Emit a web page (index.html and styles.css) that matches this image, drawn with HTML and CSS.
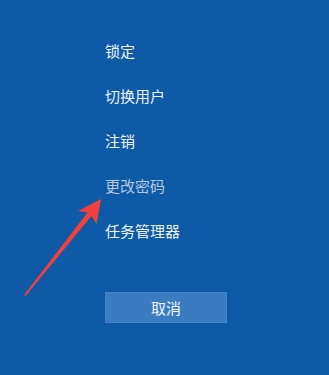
FILE: index.html
```html
<!DOCTYPE html>
<html lang="zh-CN">
<head>
<meta charset="utf-8">
<title>锁定</title>
<link rel="stylesheet" href="styles.css">
</head>
<body>
<div class="screen">
  <ul class="menu">
    <li class="item">锁定</li>
    <li class="item">切换用户</li>
    <li class="item">注销</li>
    <li class="item item-hover">更改密码</li>
    <li class="item">任务管理器</li>
  </ul>
  <button class="cancel">取消</button>
  <svg class="arrow" width="329" height="375" viewBox="0 0 329 375" aria-hidden="true">
    <polygon points="101,199 96.5,224 91.5,216 25.5,296 24,295 87.5,212.5 78,211" fill="#f2403c"/>
  </svg>
</div>
</body>
</html>
```
FILE: styles.css
```css
html, body {
  margin: 0;
  padding: 0;
}
body {
  background: #0f5aa6;
  font-family: "Noto Sans CJK SC", "Noto Sans", sans-serif;
  color: #eef3f9;
}
.screen {
  position: relative;
  width: 329px;
  height: 375px;
  overflow: hidden;
  padding: 28px 0 0 105px;
  box-sizing: border-box;
  display: flex;
  flex-direction: column;
  align-items: flex-start;
}
.menu {
  list-style: none;
  margin: 0;
  padding: 0;
  display: flex;
  flex-direction: column;
}
.item {
  font-size: 15px;
  line-height: 45px;
  height: 45px;
  color: #eef3f9;
}
.item-hover {
  color: #b4c8e0;
}
.cancel {
  margin-top: 39px;
  width: 122px;
  height: 31px;
  background: #3b7cc0;
  border: 1px solid #4683c4;
  color: #f2f6fb;
  font-family: "Noto Sans CJK SC", "Noto Sans", sans-serif;
  font-size: 15px;
  padding: 0;
}
.arrow {
  position: absolute;
  left: 0;
  top: 0;
}
```
